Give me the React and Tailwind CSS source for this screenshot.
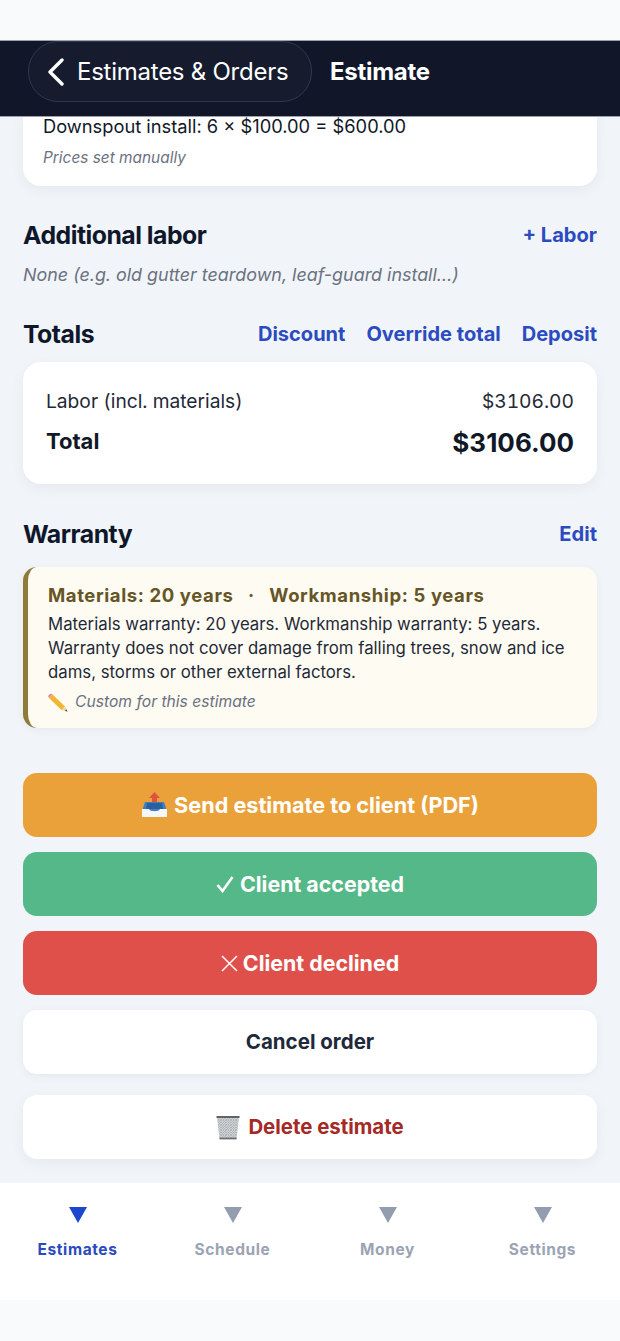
import React from "react";

function Inbox() {
  return (
    <svg width="27" height="26" viewBox="0 0 27 26" className="shrink-0">
      <path d="M13.5 0 L19 6 H16 V11 H11 V6 H8 Z" fill="#e0533f" />
      <path d="M4 10 H23 L26 19 H1 Z" fill="#3f7fc4" />
      <path d="M6 11 H21 L22 17 H5 Z" fill="#2b5f9e" />
      <path d="M1 17 H8 C9 20 18 20 19 17 H26 V25 H1 Z" fill="#f4f6f8" />
    </svg>
  );
}

function Trash() {
  return (
    <svg width="24" height="25" viewBox="0 0 24 25" className="shrink-0">
      <defs>
        <pattern id="mesh" width="2.5" height="2.5" patternUnits="userSpaceOnUse">
          <rect width="2.5" height="2.5" fill="#dfe2e3" />
          <path d="M0 0 L2.5 2.5 M2.5 0 L0 2.5" stroke="#8a8f93" strokeWidth="0.5" />
        </pattern>
      </defs>
      <path d="M1 2 H23 L20.5 24 H3.5 Z" fill="url(#mesh)" />
      <rect x="0.5" y="1" width="23" height="2" fill="#5f6468" />
      <rect x="3.5" y="22.6" width="17" height="1.8" fill="#6b7074" />
    </svg>
  );
}

function Pencil() {
  return (
    <svg width="20" height="19" viewBox="0 0 20 19" className="shrink-0">
      <path d="M4.5 1.5 L17 13.5 L13.5 17 L1 5 Z" fill="#f2b632" />
      <path d="M4.5 1.5 L1 5 L0 3 L2.5 0.5 Z" fill="#e58a9a" />
      <path d="M17 13.5 L19.5 18.5 L13.5 17 Z" fill="#f1d3a8" />
      <path d="M18.4 16.3 L19.5 18.5 L17 17.9 Z" fill="#444" />
    </svg>
  );
}

function Tab({ label, active }) {
  return (
    <div className="flex-1 flex flex-col items-center pt-[24px]">
      <svg width="18" height="16" viewBox="0 0 18 16">
        <path d="M0 0 H18 L9 16 Z" fill={active ? "#1d47cf" : "#949db0"} />
      </svg>
      <span className={`mt-[17px] text-[15.5px] leading-[20px] font-bold tracking-[0.6px] ${active ? "text-[#2b4ac0]" : "text-[#9ca3b4]"}`}>
        {label}
      </span>
    </div>
  );
}

export default function App() {
  return (
    <div className="w-[620px] h-[1341px] flex flex-col overflow-hidden bg-[#f8fafc] font-['Inter',sans-serif] text-[#111827]">
      <div className="h-[40px] shrink-0 bg-[#f9fafc]" />
      <header className="relative z-10 h-[77px] shrink-0 bg-[#111729] border-y border-[#9aa0ac] flex items-start pl-[28px]">
        <div className="h-[61px] w-[284px] rounded-[30px] border border-[#2f3850] bg-[#161c2d] flex items-center pl-[18px]">
          <svg width="18" height="28" viewBox="0 0 18 28" fill="none" stroke="#ffffff" strokeWidth="3.4" strokeLinecap="round" strokeLinejoin="round">
            <path d="M15 2 L3 14 L15 26" />
          </svg>
          <span className="ml-[12px] text-[24px] leading-[30px] text-white tracking-[-0.25px] whitespace-nowrap">Estimates &amp; Orders</span>
        </div>
        <span className="ml-[18px] mt-[15px] text-[24px] leading-[32px] font-bold text-white tracking-[-0.28px]">Estimate</span>
      </header>

      <main className="-mt-[6px] flex-1 min-h-0 overflow-hidden bg-[#f1f5f9] px-[23px]">
        <section className="bg-white rounded-b-[18px] px-[20px] pt-[6px] pb-[18px] shadow-[0_4px_14px_rgba(15,23,42,0.05)]">
          <p className="text-[18.3px] leading-[18px] text-[#111827]">Downspout install: 6 × $100.00 = $600.00</p>
          <p className="mt-[13px] text-[15.4px] leading-[20px] italic text-[#6b7280]">Prices set manually</p>
        </section>

        <div className="mt-[33px] flex items-center justify-between">
          <h2 className="text-[24.8px] leading-[32px] font-bold tracking-[-0.5px] text-[#0f172a]">Additional labor</h2>
          <span className="text-[20.1px] leading-[28px] font-bold text-[#2b4bc0]">+ Labor</span>
        </div>
        <p className="mt-[12px] text-[17.9px] leading-[24px] italic text-[#6b7280]">None (e.g. old gutter teardown, leaf-guard install…)</p>

        <div className="mt-[31px] flex items-center justify-between">
          <h2 className="text-[24.8px] leading-[32px] font-bold tracking-[-0.5px] text-[#0f172a]">Totals</h2>
          <div className="flex gap-[21px] text-[20.05px] leading-[28px] font-bold text-[#2b4bc0]">
            <span>Discount</span>
            <span>Override total</span>
            <span>Deposit</span>
          </div>
        </div>

        <section className="mt-[12px] h-[122px] bg-white rounded-[18px] px-[23px] pt-[26px] shadow-[0_4px_14px_rgba(15,23,42,0.05)]">
          <div className="flex justify-between text-[19.2px] leading-[26px] text-[#1f2937] tabular-nums">
            <span>Labor (incl. materials)</span>
            <span>$3106.00</span>
          </div>
          <div className="mt-[12px] flex justify-between items-center font-bold text-[#111827]">
            <span className="text-[22px] leading-[30px] -mt-[5px]">Total</span>
            <span className="text-[26px] leading-[34px]">$3106.00</span>
          </div>
        </section>

        <div className="mt-[34px] flex items-center justify-between">
          <h2 className="text-[24.8px] leading-[32px] font-bold tracking-[-0.5px] text-[#0f172a]">Warranty</h2>
          <span className="text-[20.1px] leading-[28px] font-bold text-[#2b4bc0]">Edit</span>
        </div>

        <section className="mt-[17px] h-[161px] bg-[#fdfbf2] rounded-[14px] border-l-[5px] border-[#8f7a3a] pl-[20px] pr-[20px] pt-[15px] shadow-[0_2px_10px_rgba(15,23,42,0.05)]">
          <div className="flex text-[18.5px] leading-[26px] font-bold text-[#665526] tracking-[0.6px] whitespace-pre">
            <span>Materials: 20 years</span>
            <span className="mx-[14.5px]">·</span>
            <span>Workmanship: 5 years</span>
          </div>
          <p className="mt-[4px] text-[16.75px] leading-[24px] text-[#1f2937]">
            Materials warranty: 20 years. Workmanship warranty: 5 years. Warranty does not cover damage from falling trees, snow and ice dams, storms or other external factors.
          </p>
          <div className="mt-[8px] flex items-center gap-[7px]">
            <Pencil />
            <span className="text-[15.65px] leading-[20px] italic text-[#6b7280]">Custom for this estimate</span>
          </div>
        </section>

        <div className="mt-[45px] flex flex-col">
          <button className="h-[64px] rounded-[14px] bg-[#eba13a] flex items-center justify-center gap-[6px] text-[21.65px] font-bold text-white">
            <Inbox />
            <span>Send estimate to client (PDF)</span>
          </button>
          <button className="mt-[15px] h-[64px] rounded-[14px] bg-[#55b888] flex items-center justify-center gap-[6px] text-[21.4px] font-bold text-white">
            <svg width="18" height="18" viewBox="0 0 18 18" fill="none" stroke="#ffffff" strokeWidth="2.6">
              <path d="M1.5 10 L6.5 16 L16.5 2" />
            </svg>
            <span>Client accepted</span>
          </button>
          <button className="mt-[15px] h-[64px] rounded-[14px] bg-[#df504b] flex items-center justify-center gap-[5px] text-[21.4px] font-bold text-white">
            <svg width="17" height="17" viewBox="0 0 17 17" fill="none" stroke="#ffffff" strokeWidth="1.5">
              <path d="M1 1 L16 16 M16 1 L1 16" />
            </svg>
            <span>Client declined</span>
          </button>
          <button className="mt-[15px] h-[64px] rounded-[14px] bg-white text-[20.5px] font-bold text-[#1e293b] shadow-[0_2px_10px_rgba(15,23,42,0.05)]">
            Cancel order
          </button>
          <button className="mt-[21px] h-[64px] rounded-[14px] bg-white flex items-center justify-center gap-[8px] text-[20.4px] font-bold text-[#a32a26] shadow-[0_4px_14px_rgba(15,23,42,0.05)]">
            <Trash />
            <span>Delete estimate</span>
          </button>
        </div>
      </main>

      <nav className="h-[117px] shrink-0 bg-white flex">
        <Tab label="Estimates" active />
        <Tab label="Schedule" />
        <Tab label="Money" />
        <Tab label="Settings" />
      </nav>
      <div className="h-[41px] shrink-0 bg-[#f8fafc]" />
    </div>
  );
}
